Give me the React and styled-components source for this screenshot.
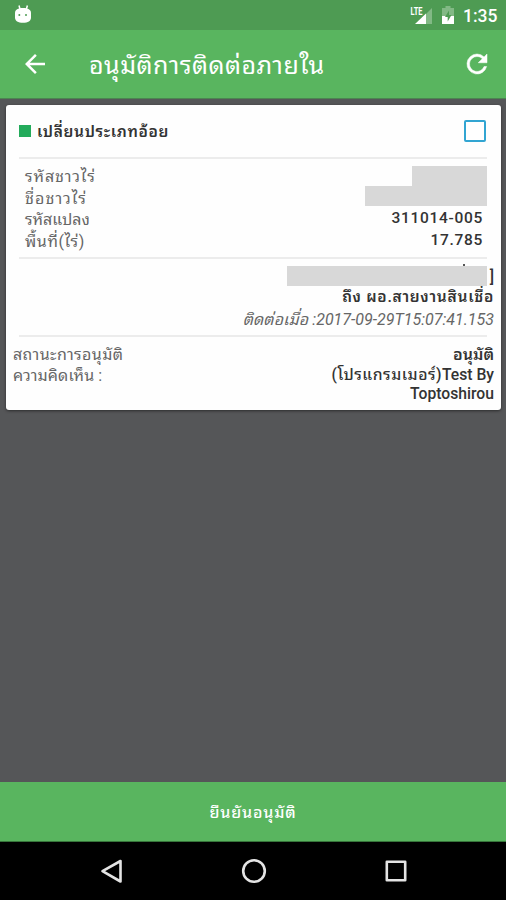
import React, { useState } from 'react'
import styled, { createGlobalStyle } from 'styled-components'

const GlobalStyle = createGlobalStyle`
  * {
    box-sizing: border-box;
  }
  body {
    margin: 0;
    font-family: Roboto, "Noto Sans Thai Looped", Loma, "Noto Sans Thai", "Noto Sans", sans-serif;
  }
`;

const Screen = styled.div`
  display: flex;
  flex-direction: column;
  width: 506px;
  height: 900px;
  overflow: hidden;
  background: #555658;
`;

const StatusBar = styled.div`
  display: flex;
  align-items: center;
  flex: none;
  height: 30px;
  padding: 0 9px 0 14px;
  background: #4e9b53;
  color: #fff;
`;
const StatusRight = styled.div`
  display: flex;
  align-items: center;
  gap: 9px;
  margin-left: auto;
`;
const Clock = styled.span`
  width: 34px;
  font-size: 17.5px;
  font-weight: 500;
  line-height: 30px;
  padding-top: 2px;
  white-space: nowrap;
`;

const AppBar = styled.header`
  display: flex;
  align-items: center;
  flex: none;
  height: 69px;
  padding: 0 14px 0 20px;
  background: #59b55f;
  border-bottom: 1px solid #4c8551;
`;
const Title = styled.h1`
  flex: 1;
  margin: 0 0 0 39px;
  padding-top: 4px;
  color: #fff;
  font-size: 25px;
  font-weight: 400;
  letter-spacing: 0.5px;
  line-height: 36px;
  white-space: nowrap;
`;
const IconButton = styled.button`
  display: flex;
  padding: 0;
  border: 0;
  background: none;
  color: #fff;
`;

const Content = styled.main`
  flex: 1;
  padding: 6px 5px 0 6px;
`;
const Card = styled.section`
  height: 305px;
  border-radius: 3px;
  background: #fefefe;
  box-shadow: 0 1px 3px rgba(0, 0, 0, 0.5);
`;
const CardHead = styled.div`
  display: flex;
  align-items: center;
  height: 52px;
  padding: 0 15px 0 13px;
`;
const Marker = styled.span`
  width: 12px;
  height: 12px;
  margin-right: 6px;
  background: #23ab5b;
`;
const CardTitle = styled.h2`
  flex: 1;
  margin: 0;
  padding-top: 2px;
  color: #333;
  font-size: 15.5px;
  font-weight: 600;
  letter-spacing: 0.65px;
  line-height: 22px;
`;
const Checkbox = styled.button`
  width: 22px;
  height: 22px;
  padding: 0;
  border: 2px solid #32a5d2;
  border-radius: 2px;
  background: ${({ $checked }) => ($checked ? '#32a5d2' : '#fff')};
`;
const Divider = styled.div`
  height: 2px;
  margin: 0 14px 0 13px;
  background: #ececec;
`;

const Group = styled.div`
  display: flex;
  flex-direction: column;
  height: ${({ $height }) => $height}px;
  padding: ${({ $padding }) => $padding};
`;
const Row = styled.div`
  display: flex;
  justify-content: space-between;
  align-items: flex-start;
  min-height: 21.6px;
`;
const Text = styled.span`
  color: ${({ $color }) => $color || '#666'};
  font-size: ${({ $size }) => $size || 16}px;
  font-weight: ${({ $weight }) => $weight || 400};
  font-style: ${({ $italic }) => ($italic ? 'italic' : 'normal')};
  letter-spacing: ${({ $spacing }) => $spacing || 0}px;
  line-height: ${({ $line }) => $line || 21.6}px;
  text-align: ${({ $right }) => ($right ? 'right' : 'left')};
  white-space: nowrap;
`;
const Spaced = styled.span`
  letter-spacing: ${({ $spacing }) => $spacing}px;
`;
const Redacted = styled.span`
  flex: none;
  width: ${({ $width }) => $width}px;
  height: 20px;
  margin-right: ${({ $offset }) => $offset || 0}px;
  background: #d8d8d8;
`;
const Sender = styled.div`
  display: flex;
  justify-content: flex-end;
  height: 21px;
`;
// tone mark that sticks out above the covered name
const CoveredName = styled(Redacted)`
  position: relative;
  &::before {
    content: '';
    position: absolute;
    top: -2px;
    right: 22px;
    width: 2px;
    height: 2px;
    background: #555;
  }
`;

const Columns = styled.div`
  display: flex;
  justify-content: space-between;
`;
const Column = styled.div`
  display: flex;
  flex-direction: column;
  align-items: ${({ $end }) => ($end ? 'flex-end' : 'flex-start')};
`;
const RedactedStack = styled.div`
  display: flex;
  flex-direction: column;
  align-items: flex-end;
  height: 40px;
`;
const Values = styled.div`
  display: flex;
  flex-direction: column;
  align-items: flex-end;
  padding: 2px 4px 0 0;
`;

const ConfirmButton = styled.button`
  flex: none;
  height: 60px;
  padding: 0 0 1px;
  border: 0;
  border-bottom: 1px solid #37763b;
  background: #59b55f;
  color: #fff;
  font-family: inherit;
  font-size: 16px;
  font-weight: 500;
  letter-spacing: 0.8px;
`;
const NavBar = styled.nav`
  display: grid;
  grid-template-columns: repeat(3, 142px);
  justify-content: center;
  justify-items: center;
  align-items: center;
  flex: none;
  height: 58px;
  padding-left: 1px;
  background: #000;
`;

const AndroidIcon = () => (
  <svg width="18" height="20" viewBox="0 0 18 20">
    <path d="M5 0.500 6 4M13.400 0.500 12.400 4" stroke="#fff" strokeWidth="1.500" />
    <path d="M1 8C1 4.500 4 3 9 3S17 4.500 17 8v4.500c0 3.500-3 5.300-8 5.300s-8-1.800-8-5.300z" fill="#fff" />
    <circle cx="5.300" cy="10" r="1" fill="#4e9b53" />
    <circle cx="12" cy="10" r="1" fill="#4e9b53" />
  </svg>
);

const LteText = styled.text`
  font-family: Roboto, sans-serif;
  font-size: 11px;
  font-weight: 700;
`;
const SignalIcon = () => (
  <svg width="24" height="20" viewBox="0 0 24 20">
    <path d="M23 3v16h-6V9z" fill="#82b985" />
    <path d="M17 8.500V19H6z" fill="#fff" />
    <LteText x="1.500" y="9.500" fill="#fff" textLength="12" lengthAdjust="spacingAndGlyphs">LTE</LteText>
  </svg>
);

const BatteryIcon = () => (
  <svg width="12" height="18" viewBox="0 0 12 18">
    <path d="M3.500 0h5v2H12v16H0V2h3.500z" fill="#82b985" />
    <path d="M0 10h12v8H0z" fill="#fff" />
    <path d="M7 4.500 3 11h2.700v4.500L9.500 9H7z" fill="#4e9b53" />
  </svg>
);

const BackIcon = () => (
  <svg width="30" height="30" viewBox="0 0 24 24" fill="currentColor">
    <path d="M20 11H7.830l5.590-5.590L12 4l-8 8 8 8 1.410-1.410L7.830 13H20v-2z" />
  </svg>
);

const RefreshIcon = () => (
  <svg width="30" height="30" viewBox="0 0 24 24" fill="currentColor" stroke="currentColor" strokeWidth="0.400">
    <path d="M17.650 6.350A7.960 7.960 0 0 0 12 4a8 8 0 1 0 7.730 10h-2.080A6 6 0 1 1 12 6c1.660 0 3.140.69 4.220 1.780L13 11h7V4l-2.350 2.350z" />
  </svg>
);

const fields = [
  { label: 'รหัสชาวไร่', spacing: 0.9 },
  { label: 'ชื่อชาวไร่', spacing: 1.1 },
  { label: 'รหัสแปลง', value: '311014-005', spacing: 0 },
  { label: 'พื้นที่(ไร่)', value: '17.785', spacing: 0.6 },
]

const App = () => {
  const [checked, setChecked] = useState(false);

  return (
    <Screen>
      <GlobalStyle />
      <StatusBar>
        <AndroidIcon />
        <StatusRight>
          <SignalIcon />
          <BatteryIcon />
          <Clock>1:35</Clock>
        </StatusRight>
      </StatusBar>
      <AppBar>
        <IconButton aria-label="back"><BackIcon /></IconButton>
        <Title>อนุมัติการติดต่อภายใน</Title>
        <IconButton aria-label="refresh"><RefreshIcon /></IconButton>
      </AppBar>
      <Content>
        <Card>
          <CardHead>
            <Marker />
            <CardTitle>เปลี่ยนประเภทอ้อย</CardTitle>
            <Checkbox
              role="checkbox"
              aria-checked={checked}
              $checked={checked}
              onClick={() => setChecked(prev => !prev)}
            />
          </CardHead>
          <Divider />
          <Group $height={98} $padding="7px 14px 0 19px">
            <Columns>
              <Column>
                {fields.map(({ label, spacing }) => (
                  <Text key={label} $spacing={spacing}>{label}</Text>
                ))}
              </Column>
              <Column $end>
                <RedactedStack>
                  <Redacted $width={75} />
                  <Redacted $width={122} />
                </RedactedStack>
                <Values>
                  {fields.filter(({ value }) => value).map(({ value }) => (
                    <Text key={value} $color="#333" $weight={500} $size={15.5} $spacing={0.7}>{value}</Text>
                  ))}
                </Values>
              </Column>
            </Columns>
          </Group>
          <Divider />
          <Group $height={76} $padding="7px 7px 0">
            <Sender>
              <CoveredName $width={200} $offset={3} />
              <Text $color="#333" $weight={500}>]</Text>
            </Sender>
            <Text $right $color="#333" $weight={600} $size={15.5} $spacing={0.7}>ถึง ผอ.สายงานสินเชื่อ</Text>
            <Text $right $italic>
              <Spaced $spacing={0.1}>ติดต่อเมื่อ </Spaced>:2017-09-29T15:07:41.153
            </Text>
          </Group>
          <Divider />
          <Group $height={73} $padding="6.6px 7px 0">
            <Row>
              <Text $spacing={0.4}>สถานะการอนุมัติ</Text>
              <Text $color="#333" $weight={600}>อนุมัติ</Text>
            </Row>
            <Row>
              <Text $spacing={0.1}>ความคิดเห็น :</Text>
              <Text $right $color="#333" $weight={500} $line={19} $size={15.7}>
                <Spaced $spacing={0.5}>(โปรแกรมเมอร์)</Spaced>Test By<br />Toptoshirou
              </Text>
            </Row>
          </Group>
        </Card>
      </Content>
      <ConfirmButton>ยืนยันอนุมัติ</ConfirmButton>
      <NavBar>
        <svg width="24" height="26" viewBox="0 0 24 26" fill="none" stroke="#e4e4e4" strokeWidth="2.600" strokeLinejoin="round">
          <path d="M20.500 3v20.500L2.500 13.200z" />
        </svg>
        <svg width="26" height="26" viewBox="0 0 26 26" fill="none" stroke="#e4e4e4" strokeWidth="2.600">
          <circle cx="13" cy="13" r="10.800" />
        </svg>
        <svg width="24" height="24" viewBox="0 0 24 24" fill="none" stroke="#e4e4e4" strokeWidth="2.600" strokeLinejoin="round">
          <rect x="2.800" y="2.800" width="18.400" height="18.400" />
        </svg>
      </NavBar>
    </Screen>
  )
}

export default App
